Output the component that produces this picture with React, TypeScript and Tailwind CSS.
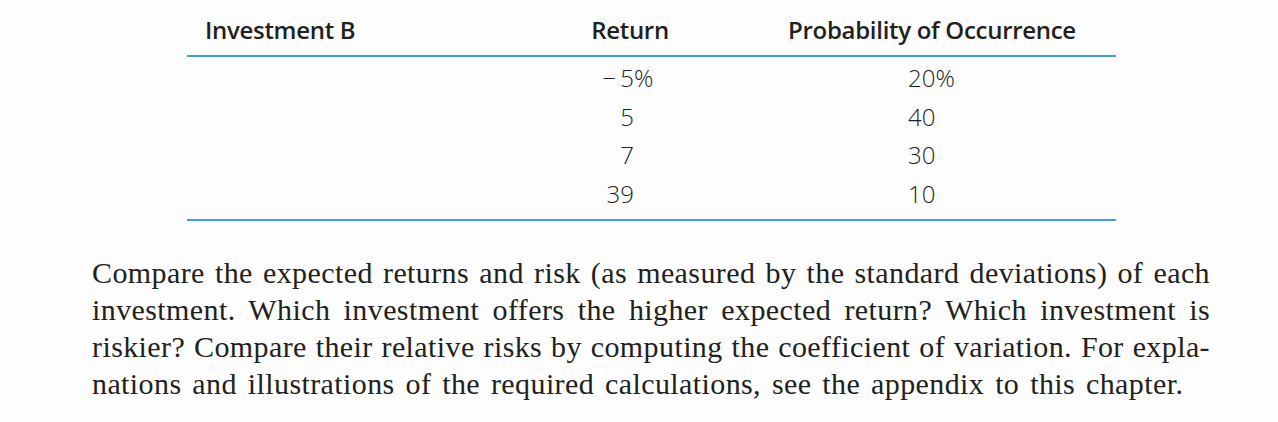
import React from 'react';

const rows = [
  { ret: '−\u20095', pct: true, prob: '20', probPct: true },
  { ret: '5', pct: false, prob: '40', probPct: false },
  { ret: '7', pct: false, prob: '30', probPct: false },
  { ret: '39', pct: false, prob: '10', probPct: false },
];

const lines = [
  'Compare the expected returns and risk (as measured by the standard deviations) of each',
  'investment. Which investment offers the higher expected return? Which investment is',
  'riskier? Compare their relative risks by computing the coefficient of variation. For expla-',
];

export default function App() {
  return (
    <div className="w-[1278px] h-[422px] bg-[#fdfdfd] text-[#231f1c] overflow-hidden">
      {/* Table */}
      <div className="ml-[187px] w-[929px] font-['Open_Sans','Liberation_Sans',sans-serif]">
        <div className="flex h-[57px] items-center text-[24px] font-semibold tracking-[-0.3px] border-b-2 border-[#3d9ee8]">
          <div className="w-[353px] pl-[18px] pt-[4px]">Investment B</div>
          <div className="w-[180px] text-center pt-[4px]">Return</div>
          <div className="flex-1 text-center pl-[28px] pt-[4px]">Probability of Occurrence</div>
        </div>
        <div className="pt-[2px] pb-[6px] border-b-2 border-[#3d9ee8] text-[24px] font-light">
          {rows.map((r, i) => (
            <div key={i} className="flex h-[38.5px] items-center">
              <div className="w-[353px]" />
              <div className="w-[180px] text-right pr-[86px]">
                {r.ret}
                <span className="inline-block w-0 whitespace-nowrap">{r.pct ? '%' : ''}</span>
              </div>
              <div className="flex-1 pl-[188px]">
                {r.prob}
                {r.probPct ? '%' : ''}
              </div>
            </div>
          ))}
        </div>
      </div>

      {/* Question text */}
      <div className="ml-[92px] w-[1118px] mt-[33px] font-['Liberation_Serif','DejaVu_Serif',serif] text-[30px] leading-[37px] tracking-[0.4px]">
        {lines.map((l, i) => (
          <div key={i} className="whitespace-nowrap text-justify [text-align-last:justify]">
            {l}
          </div>
        ))}
        <div className="whitespace-nowrap [word-spacing:3px]">
          nations and illustrations of the required calculations, see the appendix to this chapter.
        </div>
      </div>
    </div>
  );
}
